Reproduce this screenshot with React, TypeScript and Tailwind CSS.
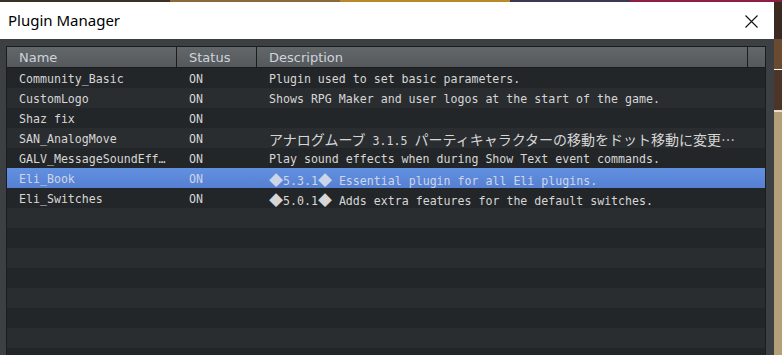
import React from "react";

const rows: { name: string; status: string; desc: React.ReactNode }[] = [
  { name: "Community_Basic", status: "ON", desc: "Plugin used to set basic parameters." },
  { name: "CustomLogo", status: "ON", desc: "Shows RPG Maker and user logos at the start of the game." },
  { name: "Shaz fix", status: "ON", desc: "" },
  {
    name: "SAN_AnalogMove",
    status: "ON",
    desc: (
      <>
        <J>アナログムーブ</J> 3.1.5 <J>パーティキャラクターの移動をドット移動に変更…</J>
      </>
    ),
  },
  { name: "GALV_MessageSoundEff…", status: "ON", desc: "Play sound effects when during Show Text event commands." },
  {
    name: "Eli_Book",
    status: "ON",
    desc: (
      <>
        <J>◆</J>5.3.1<J>◆</J> Essential plugin for all Eli plugins.
      </>
    ),
  },
  {
    name: "Eli_Switches",
    status: "ON",
    desc: (
      <>
        <J>◆</J>5.0.1<J>◆</J> Adds extra features for the default switches.
      </>
    ),
  },
];

function J({ children }: { children: React.ReactNode }) {
  return (
    <span className="text-[14px] [font-family:'Noto_Sans_CJK_JP','DejaVu_Sans_Mono',monospace] leading-[20px]">
      {children}
    </span>
  );
}

export default function App() {
  const empty = Array.from({ length: 8 });
  return (
    <div className="w-[782px] h-[355px] overflow-hidden bg-[#b59f78] flex flex-col">
      <div className="h-[2px] flex shrink-0">
        <div className="w-[170px] bg-[#3a3026]" />
        <div className="w-[170px] bg-[#8a6a3a]" />
        <div className="w-[170px] bg-[#b98a2a]" />
        <div className="w-[120px] bg-[#3b3850]" />
        <div className="flex-1 bg-[#8c1e45]" />
      </div>
      <div className="flex flex-1 min-h-0">
        <div className="w-[774px] flex flex-col shrink-0">
          <div className="h-[37px] bg-white flex items-center justify-between pl-[8px] pr-[16px] shrink-0">
            <span className="text-[15px] text-black [font-family:'Noto_Sans',sans-serif] leading-none">
              Plugin Manager
            </span>
            <svg width="13" height="13" viewBox="0 0 13 13" className="mt-[1px]">
              <path d="M0.5 0.5 L12.5 12.5 M12.5 0.5 L0.5 12.5" stroke="#111" strokeWidth="1.1" fill="none" />
            </svg>
          </div>
          <div className="flex-1 bg-[#3c4043] pt-[7px] pl-[6px] pr-[8px] flex min-h-0">
            <div className="flex-1 border-l border-t border-r border-[#1a1c1e] flex flex-col overflow-hidden bg-[#232628]">
              <div className="grid grid-cols-[170px_80px_491px_17px] h-[21px] border-b border-[#1a1c1e] bg-gradient-to-b from-[#62676a] to-[#56595c] shrink-0 text-[13px] text-[#cdd4dc] [font-family:'DejaVu_Sans',sans-serif]">
                <div className="border-r border-[#1a1c1e] pl-[12px] pt-[2px] leading-[18px]">Name</div>
                <div className="border-r border-[#1a1c1e] pl-[12px] pt-[2px] leading-[18px]">Status</div>
                <div className="border-r border-[#1a1c1e] pl-[12px] pt-[2px] leading-[18px]">Description</div>
                <div />
              </div>
              {rows.map((r, i) => {
                const sel = i === 5;
                const bg = sel
                  ? "bg-gradient-to-b from-[#6290e0] to-[#5680d2] text-[#cdd6e8]"
                  : i % 2 === 0
                  ? "bg-[#232628] text-[#d6d6d6]"
                  : "bg-[#2a2d30] text-[#d6d6d6]";
                return (
                  <div
                    key={i}
                    className={`grid grid-cols-[170px_80px_508px] h-[20px] overflow-hidden shrink-0 text-[11.6px] leading-[20px] [font-family:'DejaVu_Sans_Mono',monospace] whitespace-nowrap ${bg}`}
                  >
                    <div className="pl-[12px] pt-[1px] overflow-hidden">{r.name}</div>
                    <div className="pl-[12px] pt-[1px]">{r.status}</div>
                    <div className="pl-[12px] pt-[1px] overflow-hidden">{r.desc}</div>
                  </div>
                );
              })}
              {empty.map((_, i) => (
                <div
                  key={"e" + i}
                  className={`h-[20px] shrink-0 ${i % 2 === 0 ? "bg-[#2a2d30]" : "bg-[#232628]"}`}
                />
              ))}
            </div>
          </div>
        </div>
        <div className="flex-1 flex flex-col">
          <div className="h-[37px] bg-[#3a2a22]" />
          <div className="h-[30px] bg-[#6a4a30]" />
          <div className="h-[1px] bg-white" />
          <div className="h-[40px] bg-[#4a3528]" />
          <div className="h-[2px] bg-[#e8e0c8]" />
          <div className="flex-1 bg-[#b59f78]" />
        </div>
      </div>
    </div>
  );
}
